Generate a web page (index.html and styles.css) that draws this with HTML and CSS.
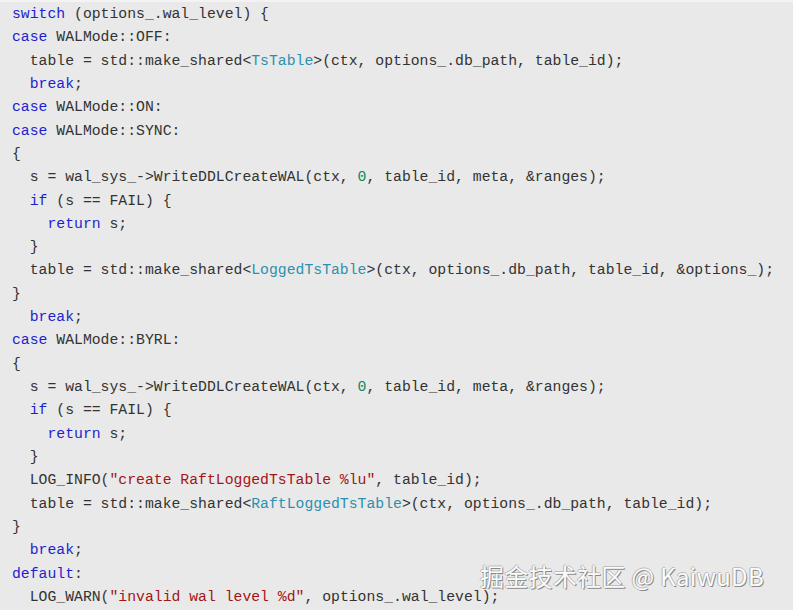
FILE: index.html
```html
<!DOCTYPE html>
<html lang="zh-CN">
<head>
<meta charset="utf-8">
<title>code</title>
<link rel="stylesheet" href="styles.css">
</head>
<body>
<div class="frame">
<pre class="code"><span class="k">switch</span> (options_.wal_level) {
<span class="k">case</span> WALMode::OFF:
  table = std::make_shared&lt;<span class="t">TsTable</span>&gt;(ctx, options_.db_path, table_id);
  <span class="k">break</span>;
<span class="k">case</span> WALMode::ON:
<span class="k">case</span> WALMode::SYNC:
{
  s = wal_sys_-&gt;WriteDDLCreateWAL(ctx, <span class="n">0</span>, table_id, meta, &amp;ranges);
  <span class="k">if</span> (s == FAIL) {
    <span class="k">return</span> s;
  }
  table = std::make_shared&lt;<span class="t">LoggedTsTable</span>&gt;(ctx, options_.db_path, table_id, &amp;options_);
}
  <span class="k">break</span>;
<span class="k">case</span> WALMode::BYRL:
{
  s = wal_sys_-&gt;WriteDDLCreateWAL(ctx, <span class="n">0</span>, table_id, meta, &amp;ranges);
  <span class="k">if</span> (s == FAIL) {
    <span class="k">return</span> s;
  }
  LOG_INFO(<span class="s">"create RaftLoggedTsTable %lu"</span>, table_id);
  table = std::make_shared&lt;<span class="t">RaftLoggedTsTable</span>&gt;(ctx, options_.db_path, table_id);
}
  <span class="k">break</span>;
<span class="k">default</span>:
  LOG_WARN(<span class="s">"invalid wal level %d"</span>, options_.wal_level);
</pre>
<div class="mark">掘金技术社区 @ KaiwuDB</div>
</div>
</body>
</html>
```
FILE: styles.css
```css
html, body {
  margin: 0;
  padding: 0;
  background: #f2f2f2;
}
.frame {
  position: relative;
  width: 793px;
  height: 610px;
  overflow: hidden;
  background: #e9e9e9;
  border-top: 2px solid #f3f3f3;
  box-sizing: border-box;
}
.code {
  margin: 0;
  padding: 1px 0 0 12px;
  font-family: "Liberation Mono", "DejaVu Sans Mono", monospace;
  font-size: 14.78px;
  line-height: 23.32px;
  color: #333333;
  white-space: pre;
}
.k { color: #1f1fd0; }
.t { color: #2b91af; }
.n { color: #09885a; }
.s { color: #a31515; }
.mark {
  position: absolute;
  left: 480px;
  top: 559px;
  font-family: "Noto Sans CJK SC", "Noto Sans", sans-serif;
  font-size: 24px;
  line-height: 30px;
  color: #fbfbfb;
  letter-spacing: 0.3px;
  text-shadow: 1px 1px 0 #8a8a8a, -1px 0 0 #b5b5b5, 0 -1px 0 #bdbdbd;
}
```
